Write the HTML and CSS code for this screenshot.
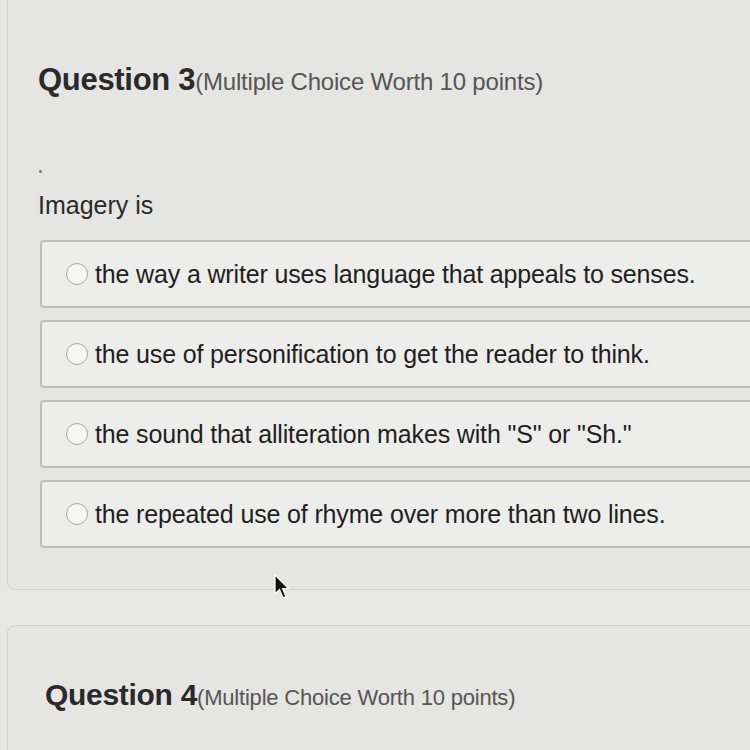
FILE: index.html
```html
<!DOCTYPE html>
<html lang="en">
<head>
    <meta charset="UTF-8">
    <meta name="viewport" content="width=device-width, initial-scale=1.0">
    <title>Quiz</title>
    <link rel="stylesheet" href="styles.css">
</head>

<body>
    <div class="page">
        <div class="card first">
            <h2 class="q-title">Question 3<span class="q-worth">(Multiple Choice Worth 10 points)</span></h2>
            <div class="dot"></div>
            <p class="q-text">Imagery is</p>

            <div class="options">
                <label class="option"><span class="radio"></span>the way a writer uses language that appeals to senses.</label>
                <label class="option"><span class="radio"></span>the use of personification to get the reader to think.</label>
                <label class="option"><span class="radio"></span>the sound that alliteration makes with "S" or "Sh."</label>
                <label class="option"><span class="radio"></span>the repeated use of rhyme over more than two lines.</label>
            </div>
        </div>

        <div class="card second">
            <h2 class="q-title small">Question 4<span class="q-worth">(Multiple Choice Worth 10 points)</span></h2>
        </div>
    </div>

    <svg class="cursor" width="16" height="26" viewBox="0 0 16 26">
        <path d="M1 1 L1 20 L5.5 15.5 L9 24 L12 22.8 L8.6 14.6 L14.5 14.5 Z" fill="#111" stroke="#fff" stroke-width="1.2"/>
    </svg>
</body>
</html>
```

FILE: styles.css
```css
html, body{
    margin: 0;
    overflow: hidden;
    height: 750px;
}

body{
    background: #e7e7e5;
    font-family: "Liberation Sans", Arial, sans-serif;
    color: #222;
    position: relative;
}

.page{
    padding-left: 7px;
}

.card{
    width: 820px;
    background: #e5e5e3;
    border: 1px solid #d2d2d0;
    border-radius: 8px;
    box-sizing: border-box;
}

.card.first{
    margin-top: -20px;
    padding: 82px 0 41px 30px;
    border-top: none;
    border-radius: 0 0 8px 8px;
}

.card.second{
    margin-top: 35px;
    padding: 51px 0 60px 37px;
}

.q-title{
    margin: 0;
    font-size: 31px;
    font-weight: bold;
    color: #2a2a2a;
    letter-spacing: -0.3px;
    line-height: 36px;
}

.q-worth{
    font-size: 24px;
    font-weight: normal;
    color: #555;
    letter-spacing: -0.2px;
}

.q-title.small{
    font-size: 30px;
}

.q-title.small .q-worth{
    font-size: 22px;
}

.dot{
    width: 3px;
    height: 3px;
    background: #777;
    border-radius: 50%;
    margin: 70px 0 0 1px;
}

.q-text{
    margin: 17px 0 20px;
    font-size: 25px;
    line-height: 30px;
    color: #2a2a2a;
}

.options{
    display: flex;
    flex-direction: column;
    gap: 12px;
    padding-left: 2px;
}

.option{
    display: flex;
    align-items: center;
    height: 68px;
    box-sizing: border-box;
    padding-left: 24px;
    background: #ededeb;
    border: 2px solid #bdbdbb;
    border-radius: 4px;
    font-size: 25px;
    color: #1f1f1f;
    letter-spacing: -0.15px;
}

.radio{
    width: 20px;
    height: 20px;
    border: 1.5px solid #a8a8a6;
    border-radius: 50%;
    background: #f6f6f5;
    margin-right: 7px;
    flex-shrink: 0;
}

.cursor{
    position: absolute;
    left: 274px;
    top: 574px;
}
```
